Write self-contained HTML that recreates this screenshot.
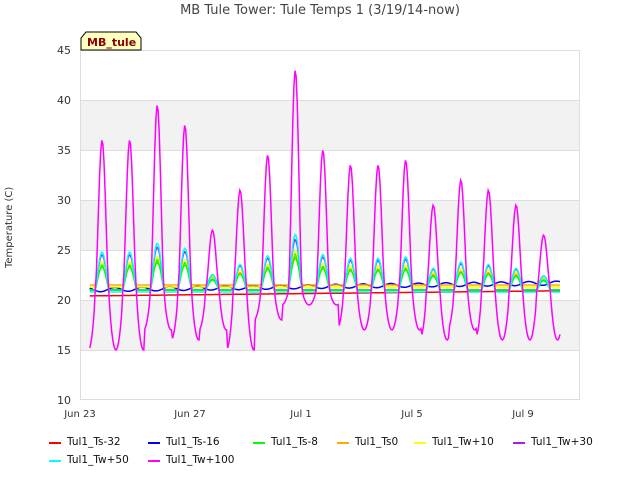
<!DOCTYPE html>
<html><head><meta charset="utf-8"><style>
body{margin:0;width:640px;height:480px;background:#fff;font-family:"DejaVu Sans","Liberation Sans",sans-serif;overflow:hidden;position:relative}
.t{position:absolute;font-size:11px;color:#333}
.leg{position:absolute;font-size:10.5px;color:#111}
.leg i{position:absolute;left:-18px;top:6px;width:12px;height:2px}
</style></head><body>
<div class="t" style="left:0;width:640px;top:3px;text-align:center;font-size:13px;color:#444">MB Tule Tower: Tule Temps 1 (3/19/14-now)</div>
<div class="t" style="left:4px;top:268px;transform:rotate(-90deg);transform-origin:0 0;font-size:10px;width:120px">Temperature (C)</div>
<svg id="s" width="640" height="480" style="position:absolute;left:0;top:0">
<rect x="80" y="100" width="500" height="50" fill="#f2f2f2"/>
<rect x="80" y="200" width="500" height="50" fill="#f2f2f2"/>
<rect x="80" y="300" width="500" height="50" fill="#f2f2f2"/>
<g stroke="#ddd" stroke-width="1">
<line x1="80" y1="50.5" x2="580" y2="50.5"/><line x1="80" y1="100.5" x2="580" y2="100.5"/><line x1="80" y1="150.5" x2="580" y2="150.5"/><line x1="80" y1="200.5" x2="580" y2="200.5"/><line x1="80" y1="250.5" x2="580" y2="250.5"/><line x1="80" y1="300.5" x2="580" y2="300.5"/><line x1="80" y1="350.5" x2="580" y2="350.5"/>
<line x1="80.5" y1="50" x2="80.5" y2="400"/><line x1="579.5" y1="50" x2="579.5" y2="400"/><line x1="80" y1="399.5" x2="580" y2="399.5"/>
</g>
<g font-size="11" fill="#333" text-anchor="end">
<text x="71" y="54">45</text><text x="71" y="104">40</text><text x="71" y="154">35</text><text x="71" y="204">30</text><text x="71" y="254">25</text><text x="71" y="304">20</text><text x="71" y="354">15</text><text x="71" y="404">10</text>
</g>
<g font-size="10" fill="#333" text-anchor="middle">
<text x="80" y="417">Jun 23</text><text x="190" y="417">Jun 27</text><text x="301" y="417">Jul 1</text><text x="412" y="417">Jul 5</text><text x="523" y="417">Jul 9</text>
</g>
<g id="d" fill="none" stroke-width="1.5"></g>
<path d="M81 50 L81 38 L86 32 L136 32 L141 38 L141 50 Z" fill="#ffffc0" stroke="#000"/>
<text x="87" y="46" font-size="11" font-weight="bold" fill="#8b0000">MB_tule</text>
</svg>
<div class="leg" style="left:67px;top:436px"><i style="background:#f00"></i>Tul1_Ts-32</div>
<div class="leg" style="left:166px;top:436px"><i style="background:#00f"></i>Tul1_Ts-16</div>
<div class="leg" style="left:271px;top:436px"><i style="background:#0f0"></i>Tul1_Ts-8</div>
<div class="leg" style="left:355px;top:436px"><i style="background:#fa0"></i>Tul1_Ts0</div>
<div class="leg" style="left:432px;top:436px"><i style="background:#ff0"></i>Tul1_Tw+10</div>
<div class="leg" style="left:531px;top:436px"><i style="background:#a020f0"></i>Tul1_Tw+30</div>
<div class="leg" style="left:67px;top:454px"><i style="background:#0ff"></i>Tul1_Tw+50</div>
<div class="leg" style="left:166px;top:454px"><i style="background:#f0f"></i>Tul1_Tw+100</div>
<script>
var g=document.getElementById('d');
function X(d){return 80+d*27.6}function Y(v){return 50+(45-v)*10}
var pk=[36,36,39.5,37.5,27,31,34.5,43,35,33.5,33.5,34,29.5,32,31,29.5,26.5];
var tr=[15,15,17,16,17,15,18,19.5,19.5,17,17,17,16,17,16,16,16];
function line(col,f){var p=[];for(var d=0.35;d<=17.4;d+=0.04){p.push(X(d).toFixed(1)+','+Y(f(d)).toFixed(1))}
var e=document.createElementNS('http://www.w3.org/2000/svg','polyline');e.setAttribute('points',p.join(' '));e.setAttribute('stroke',col);g.appendChild(e)}
function ph(d){var i=Math.floor(d-0.35);var f=d-0.35-i;return [Math.min(i,16),f]}
function wave(amp,base){return function(d){var a=ph(d),i=a[0],f=a[1];var s=Math.max(0,Math.sin((f-0.2)*2*Math.PI));return base+amp*(pk[i]-20)/16*Math.pow(s,1.2)}}
line('#f00',function(d){return 20.4+d*0.03});
line('#00f',function(d){return 21+d*0.04+0.2*Math.sin(d*6.28)});
line('#0f0',wave(2.5,21));
line('#fa0',wave(1.8,21.5));
line('#ff0',wave(2.5,21.3));
line('#a020f0',wave(3.5,21));
line('#0f0',wave(2.3,21));
line('#0ff',wave(4,20.8));
line('#f0f',function(d){var a=ph(d),i=a[0],f=a[1];var s=Math.sin((f-0.2)*2*Math.PI);
 if(s>0)return 21+(pk[i]-21)*Math.pow(s,1.6);var lo=tr[i];return 21+(lo-21)*Math.pow(-s,0.7)});
</script>
</body></html>
